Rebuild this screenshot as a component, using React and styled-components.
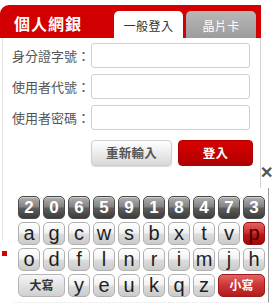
import React from "react";
import styled, { createGlobalStyle, css } from "styled-components";

const Global = createGlobalStyle`
  html, body { margin: 0; padding: 0; background: #fff; }
  body { font-family: "Noto Sans CJK TC", "Liberation Sans", sans-serif; }
  * { box-sizing: border-box; }
`;

const CJK = `"Noto Sans CJK TC", "Liberation Sans", sans-serif`;
const LATIN = `"Liberation Sans", Arial, sans-serif`;

const Page = styled.div`
  position: relative;
  width: 278px;
  height: 308px;
  overflow: hidden;
  padding-top: 5px;
`;

const Card = styled.div`
  width: 261px;
`;

const Header = styled.div`
  height: 33px;
  background: #d20000;
  border-radius: 9px 0 0 0;
  display: flex;
  align-items: flex-end;
  justify-content: space-between;
  padding: 0 5px 0 14px;
`;

const Title = styled.div`
  align-self: center;
  padding-top: 3px;
  color: #fff;
  font: 700 16px/1 ${CJK};
  letter-spacing: 1px;
`;

const Tabs = styled.div`
  display: flex;
  gap: 3px;
`;

const Tab = styled.div`
  width: ${(p) => (p.$active ? 69 : 70)}px;
  height: 27px;
  border-radius: 5px 5px 0 0;
  display: flex;
  align-items: center;
  justify-content: center;
  padding-top: 2px;
  font: 400 12px/1 ${CJK};
  letter-spacing: 0.4px;
  ${(p) =>
    p.$active
      ? css`
          background: #fff;
          color: #333;
        `
      : css`
          background: linear-gradient(#b8b8b8, #9c9c9c);
          color: #fff;
        `}
`;

const Body = styled.div`
  margin-left: 2px;
  width: 259px;
  border-left: 1px solid #e2e2e2;
  border-right: 1px solid #d4d4d4;
  padding: 5px 0 0 9px;
  height: 202px;
  display: flex;
  flex-direction: column;
  gap: 6px;
`;

const Row = styled.div`
  display: flex;
  align-items: center;
`;

const Label = styled.label`
  width: 79px;
  color: #555;
  font: 400 13px/1 ${CJK};
  white-space: nowrap;
`;

const Input = styled.input`
  width: 159px;
  height: 25px;
  border: 1px solid #cfcfcf;
  border-radius: 3px;
  background: #fff;
  outline: none;
  padding: 0 4px;
`;

const Actions = styled.div`
  display: flex;
  gap: 6px;
  margin: 4px 0 0 79px;
`;

const Button = styled.button`
  height: 26px;
  border-radius: 4px;
  font: 700 12.5px/1 ${CJK};
  letter-spacing: 0.3px;
  padding: 0;
  cursor: pointer;
  ${(p) =>
    p.$primary
      ? css`
          width: 75px;
          color: #fff;
          border: 1px solid #b00000;
          background: linear-gradient(#d90000, #c00000 60%, #b00000);
        `
      : css`
          width: 81px;
          color: #555;
          border: 1px solid #cfcfcf;
          background: linear-gradient(#ffffff, #ececec 50%, #d8d8d8);
          box-shadow: 0 1px 1px rgba(0, 0, 0, 0.15);
        `}
`;

const Notice = styled.div`
  margin: 11px 0 0 2px;
  width: 5px;
  height: 5px;
  background: #d20000;
`;

const Close = styled.div`
  position: absolute;
  left: 259px;
  top: 165px;
  width: 14px;
  height: 16px;
  color: #555;
  font: 700 16px/16px ${LATIN};
  text-align: center;
`;

const Keyboard = styled.div`
  position: absolute;
  left: 14px;
  top: 188px;
  width: 255px;
  height: 115px;
  background: #fff;
  border-right: 1px solid #9a9a9a;
  border-bottom: 1px dotted #e4e4e4;
  padding: 8px 0 0 4px;
  display: flex;
  flex-direction: column;
  gap: 3px;
`;

const KeyRow = styled.div`
  display: flex;
  gap: 3px;
`;

const variants = {
  num: css`
    color: #fff;
    font: 700 17px/1 ${LATIN};
    border: 1px solid #4a4a4a;
    background: linear-gradient(#b0b0b0 0%, #848484 45%, #5c5c5c 55%, #3c3c3c 100%);
    box-shadow: inset 0 1px 0 rgba(255, 255, 255, 0.45);
  `,
  letter: css`
    color: #1f1f1f;
    font: 400 20px/1 ${LATIN};
    border: 1px solid #b0b0b0;
    background: linear-gradient(#ffffff 0%, #f2f2f2 45%, #dcdcdc 55%, #cbcbcb 100%);
  `,
  hot: css`
    color: #4a0000;
    font: 400 20px/1 ${LATIN};
    border: 1px solid #9a1010;
    background: linear-gradient(#e46060 0%, #d03030 45%, #b81818 55%, #a00808 100%);
  `,
  upper: css`
    color: #333;
    font: 700 12px/1 ${CJK};
    border: 1px solid #b5b5b5;
    background: linear-gradient(#f6f6f6 0%, #e2e2e2 50%, #cfcfcf 100%);
  `,
  lower: css`
    color: #fff;
    font: 700 12px/1 ${CJK};
    border: 1px solid #a01818;
    background: linear-gradient(#e46464 0%, #cc3434 50%, #b01c1c 100%);
  `,
};

const Key = styled.div`
  width: ${(p) => (p.$wide ? 47 : 22)}px;
  height: 23px;
  border-radius: 5px;
  display: flex;
  align-items: center;
  justify-content: center;
  padding-bottom: 1px;
  ${(p) => variants[p.$kind || "letter"]}
`;

const numbers = ["2", "0", "6", "5", "9", "1", "8", "4", "7", "3"];
const row1 = ["a", "g", "c", "w", "s", "b", "x", "t", "v", "p"];
const row2 = ["o", "d", "f", "l", "n", "r", "i", "m", "j", "h"];
const row3 = ["y", "e", "u", "k", "q", "z"];

export default function App() {
  return (
    <Page>
      <Global />
      <Card>
        <Header>
          <Title>個人網銀</Title>
          <Tabs>
            <Tab $active>一般登入</Tab>
            <Tab>晶片卡</Tab>
          </Tabs>
        </Header>
        <Body>
          <Row>
            <Label>身分證字號：</Label>
            <Input />
          </Row>
          <Row>
            <Label>使用者代號：</Label>
            <Input />
          </Row>
          <Row>
            <Label>使用者密碼：</Label>
            <Input type="password" />
          </Row>
          <Actions>
            <Button>重新輸入</Button>
            <Button $primary>登入</Button>
          </Actions>
        </Body>
        <Notice />
      </Card>
      <Close>✕</Close>
      <Keyboard>
        <KeyRow>
          {numbers.map((n) => (
            <Key key={n} $kind="num">{n}</Key>
          ))}
        </KeyRow>
        <KeyRow>
          {row1.map((k) => (
            <Key key={k} $kind={k === "p" ? "hot" : "letter"}>{k}</Key>
          ))}
        </KeyRow>
        <KeyRow>
          {row2.map((k) => (
            <Key key={k}>{k}</Key>
          ))}
        </KeyRow>
        <KeyRow>
          <Key $wide $kind="upper">大寫</Key>
          {row3.map((k) => (
            <Key key={k}>{k}</Key>
          ))}
          <Key $wide $kind="lower">小寫</Key>
        </KeyRow>
      </Keyboard>
    </Page>
  );
}
